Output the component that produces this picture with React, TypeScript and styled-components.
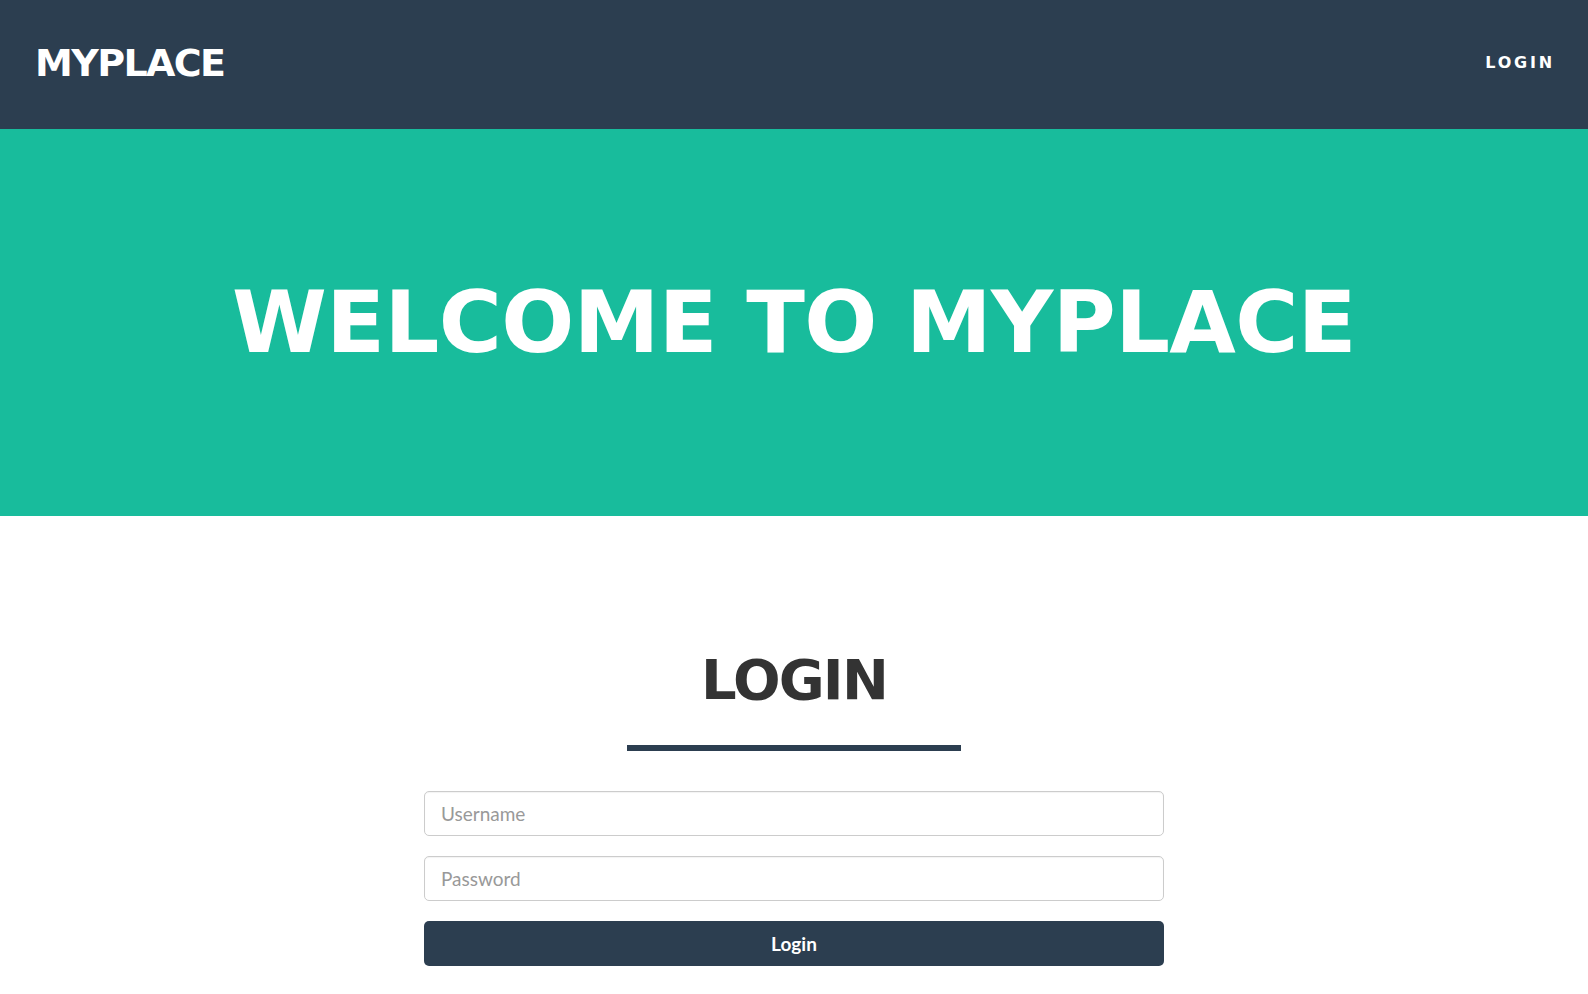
import React from 'react';
import styled, { createGlobalStyle } from 'styled-components';

const GlobalStyle = createGlobalStyle`
    html, body {
        margin: 0;
        padding: 0;
        background: #ffffff;
    }
    body {
        font-family: Lato, "Liberation Sans", sans-serif;
        color: #333333;
    }
`;

const headingFont = `"DejaVu Sans", "Liberation Sans", sans-serif`;

// Top dark navigation bar
const NavBar = styled.nav`
    height: 129px;
    background-color: #2c3e50;
    display: flex;
    align-items: center;
    justify-content: space-between;
    padding: 0 33px 0 35px;
    box-sizing: border-box;
`;

const Brand = styled.a`
    font-family: ${headingFont};
    font-weight: 700;
    font-size: 38px;
    line-height: 1;
    letter-spacing: -1.6px;
    color: #ffffff;
    text-decoration: none;
    margin-bottom: 4px;
`;

const NavLink = styled.a`
    font-family: ${headingFont};
    font-weight: 700;
    font-size: 16px;
    line-height: 1;
    letter-spacing: 2.8px;
    color: #ffffff;
    text-decoration: none;
    margin-bottom: 3px;
`;

// Teal hero banner
const Hero = styled.header`
    height: 387px;
    background-color: #18bc9c;
    display: flex;
    align-items: center;
    justify-content: center;
`;

const HeroTitle = styled.h1`
    margin: 0 0 2px;
    font-family: ${headingFont};
    font-weight: 700;
    font-size: 86px;
    line-height: 1;
    letter-spacing: -0.6px;
    color: #ffffff;
`;

// Login section below the hero
const Section = styled.section`
    display: flex;
    flex-direction: column;
    align-items: center;
    padding-top: 136px;
`;

const SectionTitle = styled.h2`
    margin: 0;
    font-family: ${headingFont};
    font-weight: 700;
    font-size: 56px;
    line-height: 1;
    letter-spacing: -1.8px;
    color: #333333;
`;

const Divider = styled.hr`
    width: 334px;
    height: 6px;
    margin: 37px 0 40px;
    border: none;
    background-color: #2c3e50;
`;

const Form = styled.form`
    width: 740px;
    display: flex;
    flex-direction: column;
    gap: 20px;
`;

const Input = styled.input`
    height: 45px;
    box-sizing: border-box;
    padding: 0 16px;
    border: 1px solid #cccccc;
    border-radius: 5px;
    font-family: Lato, "Liberation Sans", sans-serif;
    font-size: 19px;
    color: #333333;
    box-shadow: inset 0 1px 1px rgba(0, 0, 0, 0.05);
    outline: none;
    &::placeholder {
        color: #999999;
    }
`;

const SubmitButton = styled.button`
    height: 45px;
    border: none;
    border-radius: 5px;
    background-color: #2c3e50;
    color: #ffffff;
    font-family: Lato, "Liberation Sans", sans-serif;
    font-weight: 700;
    font-size: 19px;
    cursor: pointer;
`;

export default function App() {
    return (
        <>
            <GlobalStyle/>
            <NavBar>
                <Brand href="#">MYPLACE</Brand>
                <NavLink href="#">LOGIN</NavLink>
            </NavBar>
            <Hero>
                <HeroTitle>WELCOME TO MYPLACE</HeroTitle>
            </Hero>
            <Section>
                <SectionTitle>LOGIN</SectionTitle>
                <Divider/>
                <Form onSubmit={e => e.preventDefault()}>
                    <Input type="text" placeholder="Username"/>
                    <Input type="password" placeholder="Password"/>
                    <SubmitButton type="submit">Login</SubmitButton>
                </Form>
            </Section>
        </>
    );
}
